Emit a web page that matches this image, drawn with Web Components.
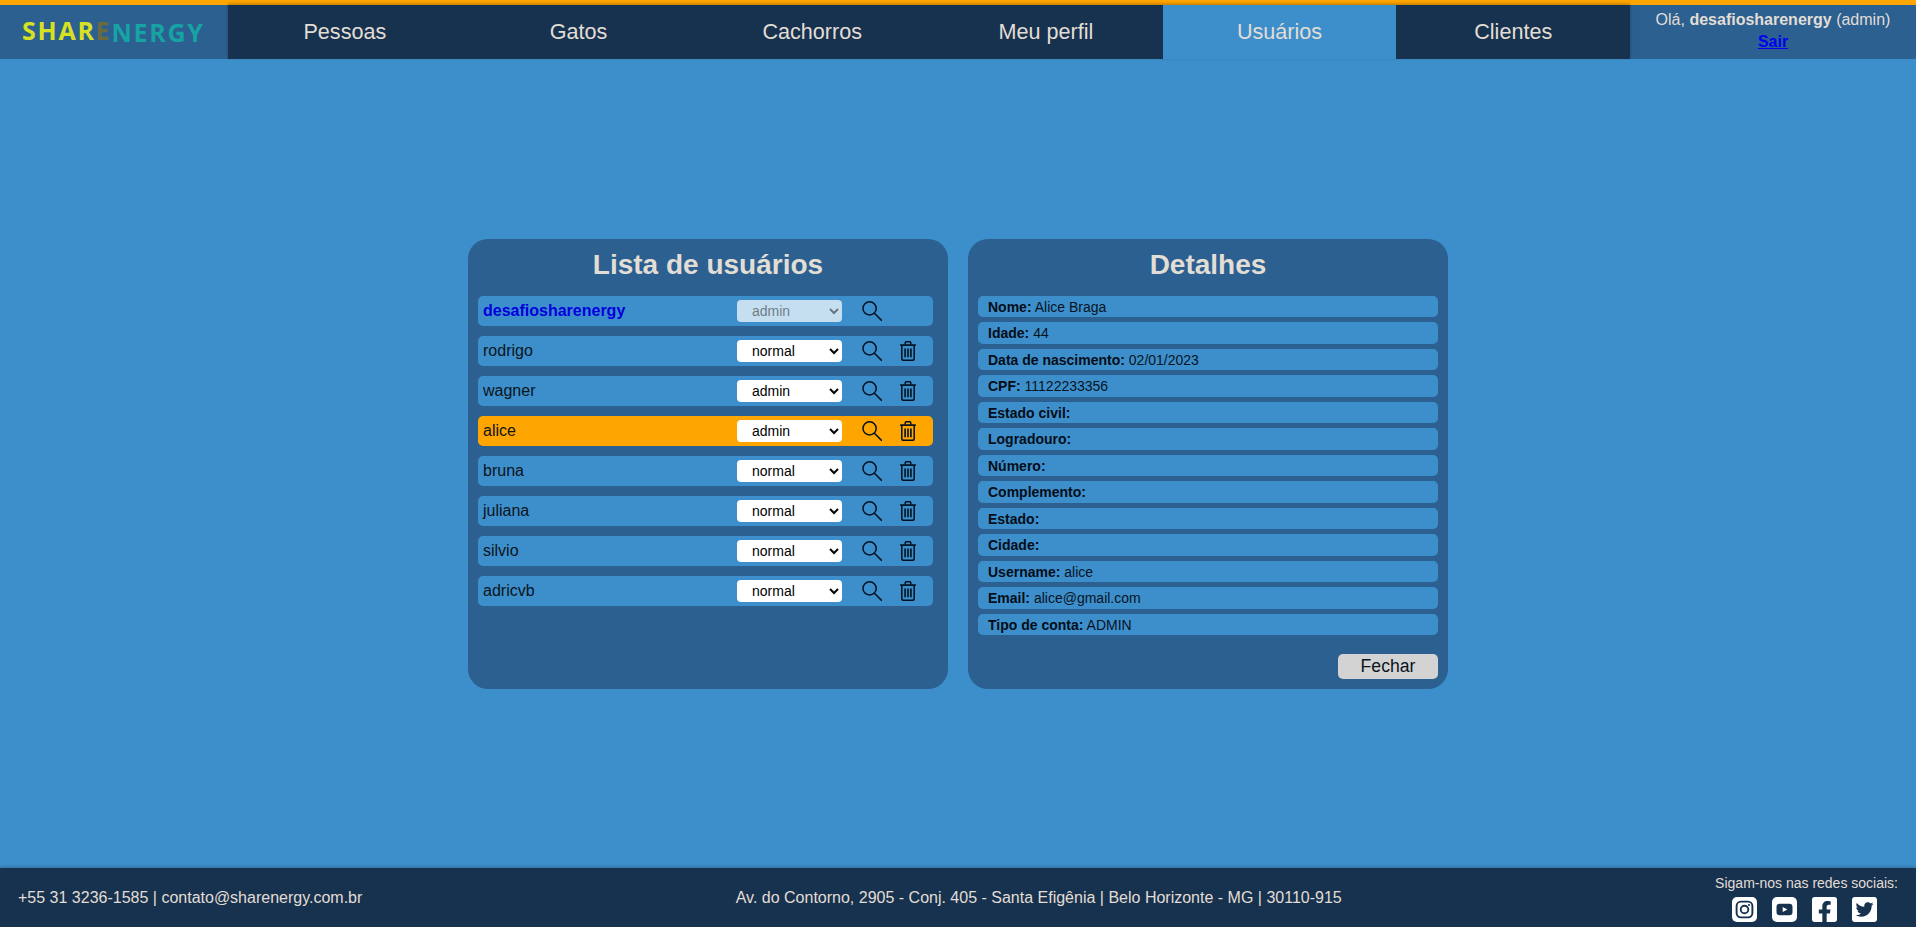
<!DOCTYPE html>
<html lang="pt-BR">
<head>
<meta charset="utf-8">
<title>Usuários</title>
<style>
html,body{margin:0;height:100%;}
body{font-family:"Liberation Sans",Arial,sans-serif;background:#3d8fcb;color:#000;}
app-shell{height:927px;}
</style>
</head>
<body>
<app-shell>
  <app-header slot="header" user="desafiosharenergy" role="admin">
    <nav-item>Pessoas</nav-item>
    <nav-item>Gatos</nav-item>
    <nav-item>Cachorros</nav-item>
    <nav-item>Meu perfil</nav-item>
    <nav-item active>Usuários</nav-item>
    <nav-item>Clientes</nav-item>
  </app-header>

  <panel-card heading="Lista de usuários">
    <user-row name="desafiosharenergy" role="admin" self></user-row>
    <user-row name="rodrigo" role="normal"></user-row>
    <user-row name="wagner" role="admin"></user-row>
    <user-row name="alice" role="admin" selected></user-row>
    <user-row name="bruna" role="normal"></user-row>
    <user-row name="juliana" role="normal"></user-row>
    <user-row name="silvio" role="normal"></user-row>
    <user-row name="adricvb" role="normal"></user-row>
  </panel-card>

  <panel-card heading="Detalhes" wide>
    <detail-row label="Nome:">Alice Braga</detail-row>
    <detail-row label="Idade:">44</detail-row>
    <detail-row label="Data de nascimento:">02/01/2023</detail-row>
    <detail-row label="CPF:">11122233356</detail-row>
    <detail-row label="Estado civil:"></detail-row>
    <detail-row label="Logradouro:"></detail-row>
    <detail-row label="Número:"></detail-row>
    <detail-row label="Complemento:"></detail-row>
    <detail-row label="Estado:"></detail-row>
    <detail-row label="Cidade:"></detail-row>
    <detail-row label="Username:">alice</detail-row>
    <detail-row label="Email:">alice@gmail.com</detail-row>
    <detail-row label="Tipo de conta:">ADMIN</detail-row>
    <close-button slot="actions">Fechar</close-button>
  </panel-card>

  <app-footer slot="footer"></app-footer>
</app-shell>

<script>
const css = {
  orange:'#ffa500', dark:'#17324f', mid:'#2b6090', light:'#3d8fcb', text:'#e2ddd5'
};
function define(name, html, extra){
  customElements.define(name, class extends HTMLElement{
    connectedCallback(){
      if(this.shadowRoot) return;
      const root=this.attachShadow({mode:'open'});
      root.innerHTML = typeof html==='function' ? html(this) : html;
      if(extra) extra(this,root);
    }
  });
}

define('app-shell',`
<style>
:host{display:flex;flex-direction:column;height:927px;overflow:hidden;background:${css.light};}
main{flex:1;display:flex;justify-content:center;align-items:center;gap:20px;min-height:0;}
</style>
<slot name="header"></slot>
<main><slot></slot></main>
<slot name="footer"></slot>`);

define('app-header',el=>`
<style>
:host{display:flex;height:54px;border-top:5px solid ${css.orange};background:${css.mid};flex:none;font-family:"Liberation Sans",Arial,sans-serif;}
.logo{width:228px;flex:none;display:flex;align-items:center;padding:0 0 2px 22px;box-sizing:border-box;
  font-family:"Open Sans",sans-serif;font-weight:700;font-size:25px;letter-spacing:1.75px;line-height:1;color:#d8e023;white-space:nowrap;}
.logo .b{color:#17a3a3;vertical-align:-1.5px;}
.logo .e{vertical-align:-.5px;color:transparent;background:linear-gradient(90deg,#6b6a3e 0,#6b6a3e 78%,#17a3a3 78%);-webkit-background-clip:text;background-clip:text;}
nav{flex:1;display:flex;background:${css.dark};box-shadow:0 -1px 3px rgba(0,0,0,.3);}
.user{width:286px;flex:none;text-align:center;color:${css.text};font-size:16px;line-height:22px;padding-top:4px;box-sizing:border-box;}
.user b{font-weight:700;}
.user a{color:#0000ee;font-weight:700;text-decoration:underline;display:block;}
</style>
<div class="logo"><span>SHAR<span class="e">E</span><span class="b">NERGY</span></span></div>
<nav><slot></slot></nav>
<div class="user">Olá, <b>${el.getAttribute('user')}</b> (${el.getAttribute('role')})<a href="#">Sair</a></div>`);

define('nav-item',el=>`
<style>
:host{flex:1 1 0;display:flex;align-items:center;justify-content:center;font-size:21.6px;color:${css.text};
  background:${el.hasAttribute('active')?css.light:'transparent'};}
</style><slot></slot>`);

define('panel-card',el=>`
<style>
:host{display:flex;flex-direction:column;width:480px;height:450px;box-sizing:border-box;background:${css.mid};border-radius:20px;
  padding:0 ${el.hasAttribute('wide')?10:15}px 10px 10px;flex:none;}
h2{margin:0 ${el.hasAttribute('wide')?0:-5}px 0 0;height:57px;box-sizing:border-box;padding-top:10px;font-size:28px;line-height:32px;font-weight:700;text-align:center;color:${css.text};}
.list{display:flex;flex-direction:column;gap:${el.hasAttribute('wide')?5:10}px;}
.actions{margin-top:auto;display:flex;justify-content:flex-end;}
</style>
<h2>${el.getAttribute('heading')}</h2>
<div class="list"><slot></slot></div>
<div class="actions"><slot name="actions"></slot></div>`);

const searchIcon=`<svg width="20" height="20" viewBox="0 0 20 20" fill="none" stroke="currentColor" aria-hidden="true"><circle cx="7.6" cy="7.4" r="6.6" stroke-width="1.5"/><path d="M12.4 12.2 19.6 19.4" stroke-width="1.6" stroke-linecap="round"/></svg>`;
const trashIcon=`<svg width="16" height="20" viewBox="0 0 16 20" fill="none" stroke="currentColor" stroke-width="1.5" aria-hidden="true"><path d="M.2 4.1H15.8" stroke-width="1.7"/><path d="M5.2 3.6V1.9C5.2 1.2 5.7.8 6.3.8H9.7C10.3.8 10.8 1.2 10.8 1.9V3.6"/><path d="M1.8 4.4V17.4C1.8 18.5 2.6 19.2 3.6 19.2H12.4C13.4 19.2 14.2 18.5 14.2 17.4V4.4"/><path d="M5.1 7.4V16.2M8 7.4V16.2M10.9 7.4V16.2" stroke-width="1.6"/></svg>`;

define('user-row',el=>{
  const role=el.getAttribute('role'), self=el.hasAttribute('self');
  return `
<style>
:host{display:flex;align-items:center;height:30px;box-sizing:border-box;border-radius:5px;padding-left:5px;
  background:${el.hasAttribute('selected')?css.orange:css.light};font-size:16px;color:#0a1420;}
.name{flex:1;min-width:0;${self?'font-weight:700;color:#0000dd;':''}}
select{width:105px;height:22px;box-sizing:border-box;border:0;border-radius:4px;background-color:#fff;color:#000;font:14px "Liberation Sans",Arial,sans-serif;padding:0 0 0 11px;margin:0;}
select:disabled{background-color:rgba(255,255,255,.7);color:rgba(16,16,16,.5);opacity:1;}
.ico{display:flex;color:#03101f;flex:none;}
.s{margin-left:20px;width:20px;}
.t{margin-left:18px;width:16px;margin-right:17px;}
</style>
<span class="name">${el.getAttribute('name')}</span>
<select ${self?'disabled':''}><option ${role==='admin'?'selected':''}>admin</option><option ${role==='normal'?'selected':''}>normal</option></select>
<span class="ico s">${searchIcon}</span>
<span class="ico t">${self?'':trashIcon}</span>`;
});

define('detail-row',el=>`
<style>
:host{display:block;height:21.5px;line-height:22.2px;box-sizing:border-box;border-radius:5px;padding-left:10px;background:${css.light};font-size:14px;color:#07131f;overflow:hidden;}
b{font-weight:700;color:#050d18;}
</style><span><b>${el.getAttribute('label')}</b> <slot></slot></span>`);

define('close-button',`
<style>
:host{display:block;}
button{display:block;width:100px;height:25px;padding:0;border:0;border-radius:5px;background:#d3d3d3;color:#0a1420;font:17.6px "Liberation Sans",Arial,sans-serif;}
</style><button><slot></slot></button>`);

define('social-icon',el=>{
  const k=el.getAttribute('kind');
  const white='#fff', d=css.dark;
  const art={
    instagram:`<svg width="25" height="25" viewBox="0 0 25 25" aria-hidden="true"><rect width="25" height="25" rx="5" fill="${white}"/><rect x="4.6" y="4.6" width="15.8" height="15.8" rx="4.4" fill="none" stroke="${d}" stroke-width="1.9"/><circle cx="12.5" cy="12.5" r="3.8" fill="none" stroke="${d}" stroke-width="1.9"/><circle cx="17" cy="8" r="1.1" fill="${d}"/></svg>`,
    youtube:`<svg width="25" height="25" viewBox="0 0 25 25" aria-hidden="true"><rect width="25" height="25" rx="5" fill="${white}"/><rect x="4.5" y="6.7" width="16" height="11.6" rx="3.2" fill="${d}"/><path d="M10.7 9.9 15.4 12.5 10.7 15.1Z" fill="${white}"/></svg>`,
    facebook:`<svg width="25" height="25" viewBox="0 32 448 448" aria-hidden="true"><path fill="${white}" d="M400 32H48A48 48 0 0 0 0 80v352a48 48 0 0 0 48 48h137.25V327.69h-63V256h63v-54.64c0-62.15 37-96.48 93.67-96.48 27.14 0 55.52 4.84 55.52 4.84v61h-31.27c-30.81 0-40.42 19.12-40.42 38.73V256h68.78l-11 71.69h-57.78V480H400a48 48 0 0 0 48-48V80a48 48 0 0 0-48-48z"/></svg>`,
    twitter:`<svg width="25" height="25" viewBox="0 32 448 448" aria-hidden="true"><path fill="${white}" d="M400 32H48C21.5 32 0 53.5 0 80v352c0 26.5 21.5 48 48 48h352c26.5 0 48-21.5 48-48V80c0-26.5-21.5-48-48-48zm-48.9 158.8c.2 2.8.2 5.7.2 8.5 0 86.7-66 186.6-186.6 186.6-37.2 0-71.7-10.8-100.7-29.4 5.3.6 10.4.8 15.8.8 30.7 0 58.9-10.4 81.4-28-28.8-.6-53-19.5-61.3-45.5 10.1 1.5 19.2 1.5 29.6-1.2-30-6.1-52.5-32.5-52.5-64.4v-.8c8.7 4.9 18.9 7.9 29.6 8.3a65.447 65.447 0 0 1-29.2-54.6c0-12.2 3.2-23.4 8.9-33.1 32.3 39.8 80.8 65.8 135.2 68.6-9.3-44.5 24-80.6 64-80.6 18.9 0 35.9 7.9 47.9 20.7 14.8-2.8 29-8.3 41.6-15.8-4.9 15.2-15.2 28-28.8 36.2 13.2-1.4 26-5.1 37.8-10.2-8.9 13.1-20.1 24.7-32.9 34z"/></svg>`
  };
  return `<style>:host{display:block;width:25px;height:25px;}svg{display:block;}</style>${art[k]}`;
});

define('app-footer',`
<style>
:host{display:flex;align-items:center;justify-content:space-between;height:59px;box-sizing:border-box;flex:none;padding:0 18px;background:${css.dark};color:${css.text};font-size:16px;box-shadow:0 0 4px rgba(0,0,0,.4);position:relative;}
.soc{display:flex;flex-direction:column;align-items:center;font-size:14px;gap:6px;line-height:16px;padding-top:1px;}
.ics{display:flex;gap:15px;margin-right:4px;}
</style>
<span>+55 31 3236-1585 | contato@sharenergy.com.br</span>
<span>Av. do Contorno, 2905 - Conj. 405 - Santa Efigênia | Belo Horizonte - MG | 30110-915</span>
<div class="soc"><span>Sigam-nos nas redes sociais:</span>
<div class="ics"><social-icon kind="instagram"></social-icon><social-icon kind="youtube"></social-icon><social-icon kind="facebook"></social-icon><social-icon kind="twitter"></social-icon></div></div>`);
</script>
</body>
</html>
